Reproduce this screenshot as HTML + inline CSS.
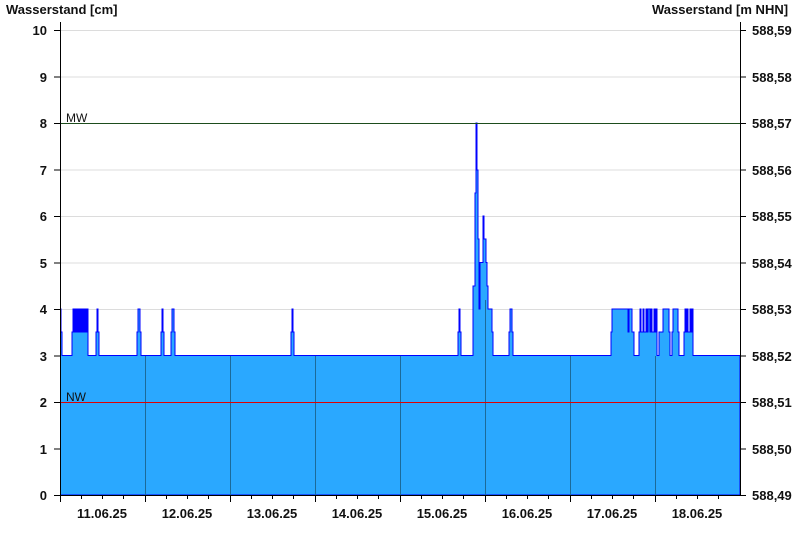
<!DOCTYPE html><html><head><meta charset="utf-8"><style>body{margin:0;background:#fff}svg{display:block;font-family:"Liberation Sans",Arial,sans-serif;font-weight:bold;font-size:13px;fill:#111}</style></head><body>
<svg width="800" height="550" viewBox="0 0 800 550">
<g stroke="#dcdcdc" stroke-width="1">
<line x1="60" x2="740" y1="30.5" y2="30.5"/><line x1="60" x2="740" y1="77" y2="77"/><line x1="60" x2="740" y1="170" y2="170"/><line x1="60" x2="740" y1="216.5" y2="216.5"/><line x1="60" x2="740" y1="263" y2="263"/><line x1="60" x2="740" y1="309.5" y2="309.5"/>
</g>
<path fill="#2aa8ff" stroke="#0000ff" stroke-width="1" d="M60.5,495 V309 H61 V332 H62 V355.5 H72 V332 H73 V309 H74 V332 H75 V309 H76 V332 H77 V309 H78 V332 H79 V309 H80 V332 H81 V309 H82 V332 H83 V309 H84 V332 H85 V309 H86 V332 H87 V309 H88 V355.5 H96 V332 H97 V309 H98 V332 H99 V355.5 H137 V332 H138 V309 H140 V332 H141 V355.5 H161 V332 H162 V309 H163 V332 H164 V355.5 H171 V332 H172 V309 H174 V332 H175 V355.5 H291 V332 H292 V309 H293 V332 H294 V355.5 H458 V332 H459 V309 H460 V332 H461 V355.5 H473 V286 H475 V193 H476 V123 H477 V170 H478 V239 H479 V309 H480 V262.5 H483 V216 H484 V239 H486 V262.5 H487 V286 H488 V309 H492 V332 H493 V355.5 H509 V332 H510 V309 H512 V332 H513 V355.5 H611 V332 H612 V309 H628 V332 H629 V309 H632 V332 H634 V355.5 H639 V332 H640 V309 H641 V332 H643 V309 H644 V332 H646 V309 H647 V332 H648 V309 H650 V332 H651 V309 H652 V332 H654 V309 H655 V332 H656 V309 H657 V355.5 H659 V332 H663 V309 H669 V332 H670 V355.5 H672 V332 H673 V309 H678 V332 H679 V355.5 H684 V332 H685 V309 H686 V332 H687 V309 H688 V332 H690 V309 H691 V332 H692 V309 H693 V355.5 H740 V495 Z"/>
<g stroke="#1b6a9a" stroke-width="1">
<line x1="145.5" x2="145.5" y1="356" y2="495"/><line x1="230.5" x2="230.5" y1="356" y2="495"/><line x1="315.5" x2="315.5" y1="356" y2="495"/><line x1="400.5" x2="400.5" y1="356" y2="495"/><line x1="485.5" x2="485.5" y1="300" y2="495"/><line x1="570.5" x2="570.5" y1="356" y2="495"/><line x1="655.5" x2="655.5" y1="356" y2="495"/>
</g>
<line x1="60" x2="740" y1="123.5" y2="123.5" stroke="#1d4d1d"/>
<line x1="60" x2="740" y1="402.5" y2="402.5" stroke="#e00000"/>
<text x="66" y="122" style="font-weight:normal;font-size:12px">MW</text>
<text x="66" y="401" style="font-weight:normal;font-size:12px">NW</text>
<g stroke="#000" stroke-width="1">
<line x1="60.5" x2="60.5" y1="22" y2="502"/><line x1="740.5" x2="740.5" y1="22" y2="495"/><line x1="54" x2="740" y1="495.5" y2="495.5"/>
<path d="M54,30.5H60M54,77H60M54,123.5H60M54,170H60M54,216.5H60M54,263H60M54,309.5H60M54,356H60M54,402.5H60M54,449H60M740,30.5H746M740,77H746M740,123.5H746M740,170H746M740,216.5H746M740,263H746M740,309.5H746M740,356H746M740,402.5H746M740,449H746M740,495.5H746"/>
<path d="M145.5,495V502M230.5,495V502M315.5,495V502M400.5,495V502M485.5,495V502M570.5,495V502M655.5,495V502M81.5,495V499M102.5,495V499M123.5,495V499M166.5,495V499M187.5,495V499M208.5,495V499M251.5,495V499M272.5,495V499M293.5,495V499M336.5,495V499M357.5,495V499M378.5,495V499M421.5,495V499M442.5,495V499M463.5,495V499M506.5,495V499M527.5,495V499M548.5,495V499M591.5,495V499M612.5,495V499M633.5,495V499M676.5,495V499M697.5,495V499M718.5,495V499"/>
</g>
<text x="6" y="14">Wasserstand [cm]</text>
<text x="652" y="14">Wasserstand [m NHN]</text>
<g text-anchor="end">
<text x="47" y="35">10</text><text x="47" y="82">9</text><text x="47" y="128">8</text><text x="47" y="175">7</text><text x="47" y="221">6</text><text x="47" y="268">5</text><text x="47" y="314">4</text><text x="47" y="361">3</text><text x="47" y="407">2</text><text x="47" y="454">1</text><text x="47" y="500">0</text>
</g>
<g>
<text x="752" y="35">588,59</text><text x="752" y="82">588,58</text><text x="752" y="128">588,57</text><text x="752" y="175">588,56</text><text x="752" y="221">588,55</text><text x="752" y="268">588,54</text><text x="752" y="314">588,53</text><text x="752" y="361">588,52</text><text x="752" y="407">588,51</text><text x="752" y="454">588,50</text><text x="752" y="500">588,49</text>
</g>
<g text-anchor="middle">
<text x="102" y="518">11.06.25</text><text x="187" y="518">12.06.25</text><text x="272" y="518">13.06.25</text><text x="357" y="518">14.06.25</text><text x="442" y="518">15.06.25</text><text x="527" y="518">16.06.25</text><text x="612" y="518">17.06.25</text><text x="697" y="518">18.06.25</text>
</g>
</svg></body></html>
